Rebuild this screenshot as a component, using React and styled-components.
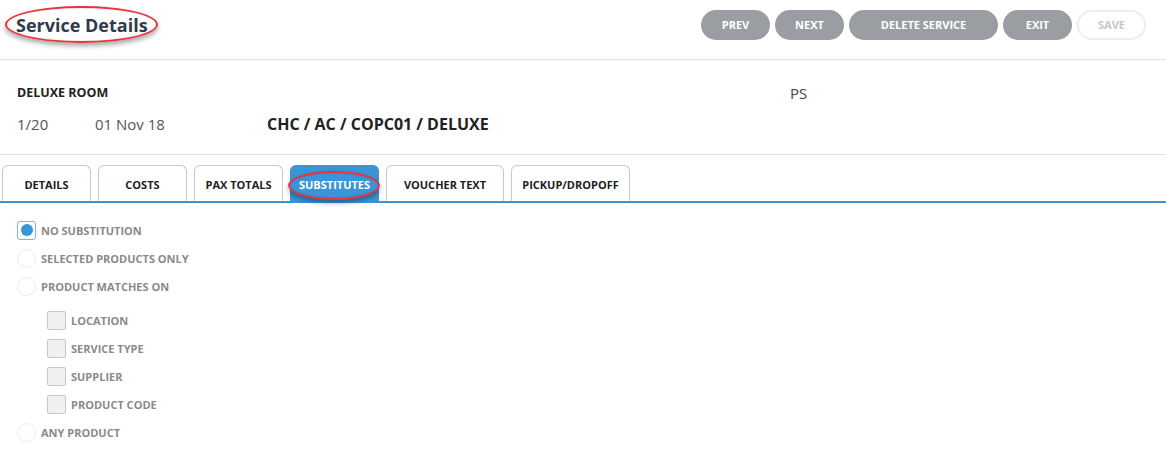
import React, {useState} from 'react';
import styled, {createGlobalStyle} from "styled-components";

const Global = createGlobalStyle`
  body {
    margin: 0;
    background: #fff;
    font-family: "Open Sans", "Liberation Sans", sans-serif;
  }
`

const Page = styled.div`
  width: 1166px;
  height: 449px;
  overflow: hidden;
`

const Header = styled.div`
  height: 60px;
  display: flex;
  align-items: center;
  justify-content: space-between;
  padding: 0 20px 0 16px;
  border-bottom: 1px solid #e0dfe8;
  box-sizing: border-box;
`

const Title = styled.h1`
  position: relative;
  margin: 0 0 9px 0;
  font-size: 18px;
  font-weight: 700;
  color: #2f3a4a;
`

const Ring = styled.span`
  position: absolute;
  left: ${p => p.l}px;
  top: ${p => p.t}px;
  right: ${p => p.r}px;
  bottom: ${p => p.b}px;
  border: 2px solid #e8323c;
  border-radius: 50%;
  box-shadow: 0 3px 5px rgba(0,0,0,0.35), inset 0 0 2px rgba(0,0,0,0.15);
  pointer-events: none;
`

const Actions = styled.div`
  display: flex;
  gap: 5px;
  margin-bottom: 10px;
`

const Action = styled.button`
  width: ${p => p.w || 69}px;
  height: 30px;
  border-radius: 15px;
  border: 2px solid ${p => p.disabled ? "#eceeee" : "#9a9ea2"};
  background: ${p => p.disabled ? "#fff" : "#9a9ea2"};
  color: ${p => p.disabled ? "#c4c7ca" : "#fff"};
  font-family: "Open Sans", sans-serif;
  font-size: 11px;
  font-weight: 700;
  padding: 0;
`

const Info = styled.div`
  height: 95px;
  border-bottom: 1px solid #e0dfe8;
  box-sizing: border-box;
  display: grid;
  grid-template-columns: 773px 1fr;
  padding: 24px 0 0 17px;
`

const InfoLeft = styled.div`
  display: flex;
  flex-direction: column;
`

const RoomName = styled.div`
  font-size: 12.5px;
  font-weight: 700;
  color: #222;
  height: 18px;
  line-height: 18px;
`

const InfoRow = styled.div`
  display: flex;
  align-items: baseline;
  margin-top: 11px;
`

const Muted = styled.span`
  font-size: 15px;
  color: #555;
  width: ${p => p.w}px;
`

const Code = styled.span`
  font-size: 16px;
  font-weight: 700;
  color: #222;
`

const Initials = styled.div`
  font-size: 15px;
  color: #3b4657;
  line-height: 18px;
`

const Tabs = styled.div`
  display: flex;
  gap: 7px;
  padding: 10px 0 0 2px;
  border-bottom: 2px solid #3a94d6;
`

const Tab = styled.div`
  position: relative;
  width: ${p => p.w}px;
  height: 36px;
  box-sizing: border-box;
  display: flex;
  align-items: center;
  justify-content: center;
  border: 1px solid ${p => p.active ? "#3a94d6" : "#c9c9c9"};
  border-bottom: none;
  border-radius: 6px 6px 0 0;
  background: ${p => p.active ? "#3a94d6" : "#fff"};
  color: ${p => p.active ? "#fff" : "#1d1d1d"};
  font-size: 11px;
  font-weight: 700;
  padding-top: 2px;
`

const Options = styled.div`
  display: flex;
  flex-direction: column;
  padding: 13px 0 0 17px;
`

const Row = styled.label`
  display: flex;
  align-items: center;
  height: 28px;
  gap: 5px;
  padding-left: ${p => p.indent ? 30 : 0}px;
  margin-top: ${p => p.gapTop || 0}px;
  font-size: 11px;
  font-weight: 700;
  color: #8a8a8a;
`

const Radio = styled.span`
  width: 19px;
  height: 19px;
  box-sizing: border-box;
  display: flex;
  align-items: center;
  justify-content: center;
  border-radius: ${p => p.focus ? "3px" : "50%"};
  border: ${p => p.focus ? "1.5px solid #7db4e6" : "1px solid #ececec"};
  &::after {
    content: "";
    display: ${p => p.checked ? "block" : "none"};
    width: 12px;
    height: 12px;
    border-radius: 50%;
    background: #3a94d6;
  }
`

const Check = styled.span`
  width: 19px;
  height: 19px;
  box-sizing: border-box;
  border: 1px solid #c8c8c8;
  border-radius: 2px;
  background: #f0f0f0;
`

const tabs = [
  {label: "DETAILS", w: 89},
  {label: "COSTS", w: 89},
  {label: "PAX TOTALS", w: 89},
  {label: "SUBSTITUTES", w: 89},
  {label: "VOUCHER TEXT", w: 118},
  {label: "PICKUP/DROPOFF", w: 119},
]

const matches = ["LOCATION", "SERVICE TYPE", "SUPPLIER", "PRODUCT CODE"]

function App() {
  const [active, setActive] = useState("SUBSTITUTES")
  const [choice, setChoice] = useState("none")

  return (
    <Page>
      <Global />
      <Header>
        <Title>
          Service Details
          <Ring l={-11} t={-7} r={-10} b={-6} />
        </Title>
        <Actions>
          <Action>PREV</Action>
          <Action>NEXT</Action>
          <Action w={149}>DELETE SERVICE</Action>
          <Action>EXIT</Action>
          <Action disabled>SAVE</Action>
        </Actions>
      </Header>
      <Info>
        <InfoLeft>
          <RoomName>DELUXE ROOM</RoomName>
          <InfoRow>
            <Muted w={78}>1/20</Muted>
            <Muted w={172}>01 Nov 18</Muted>
            <Code>CHC / AC / COPC01 / DELUXE</Code>
          </InfoRow>
        </InfoLeft>
        <Initials>PS</Initials>
      </Info>
      <Tabs>
        {tabs.map(t => (
          <Tab key={t.label} w={t.w} active={active === t.label} onClick={() => setActive(t.label)}>
            {t.label}
            {active === t.label && <Ring l={-3} t={5} r={-2} b={1} />}
          </Tab>
        ))}
      </Tabs>
      <Options>
        <Row onClick={() => setChoice("none")}>
          <Radio focus checked={choice === "none"} />NO SUBSTITUTION
        </Row>
        <Row onClick={() => setChoice("selected")}>
          <Radio checked={choice === "selected"} />SELECTED PRODUCTS ONLY
        </Row>
        <Row onClick={() => setChoice("matches")}>
          <Radio checked={choice === "matches"} />PRODUCT MATCHES ON
        </Row>
        {matches.map((m, i) => (
          <Row key={m} indent gapTop={i === 0 ? 6 : 0}>
            <Check />{m}
          </Row>
        ))}
        <Row onClick={() => setChoice("any")}>
          <Radio checked={choice === "any"} />ANY PRODUCT
        </Row>
      </Options>
    </Page>
  );
}

export default App;
